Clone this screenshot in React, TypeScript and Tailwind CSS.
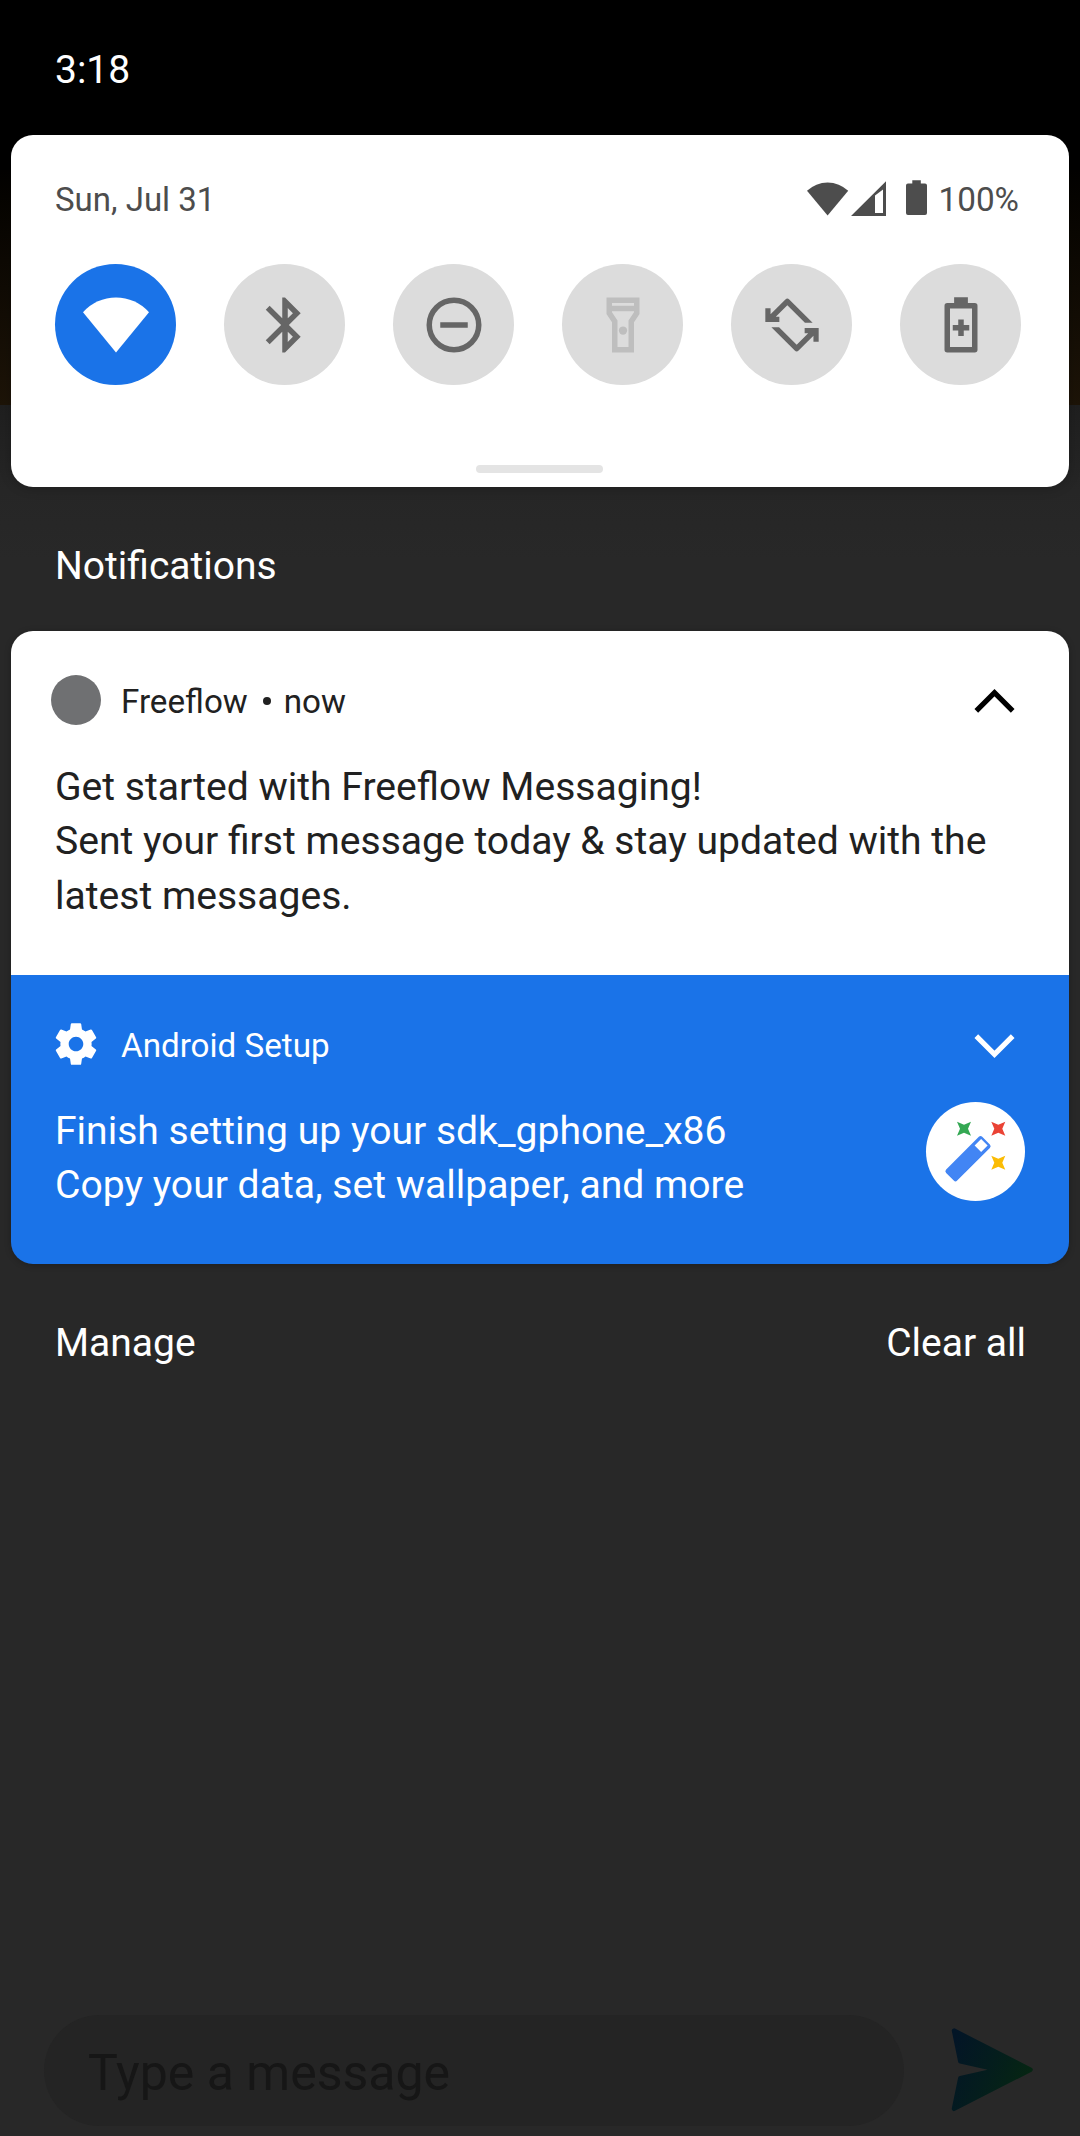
import type { ReactNode } from "react";

function Tile({ active = false, dim = false, children }: { active?: boolean; dim?: boolean; children: ReactNode }) {
  const tone = active ? "bg-[#1a73e8] text-white" : dim ? "bg-[#dcdcdc] text-[#bebebe]" : "bg-[#dcdcdc] text-[#666666]";
  return (
    <button className={`flex size-[121px] shrink-0 items-start rounded-full pt-[28px] pl-[28px] ${tone}`}>
      <svg viewBox="0 0 24 24" className="block size-[66px] shrink-0" fill="currentColor" fillRule="evenodd">
        {children}
      </svg>
    </button>
  );
}

function StatusIcons() {
  return (
    <div className="mr-[6px] flex items-start text-[#4d4d4d]">
      <svg className="h-9 w-[42px]" viewBox="0 0 42 36" fill="currentColor">
        <path d="M0 10.8 A30 30 0 0 1 41.2 10.8 L20.6 35.4 Z" />
      </svg>
      <svg className="ml-[2px] h-9 w-9" viewBox="0 0 36 36" fill="currentColor" fillRule="evenodd">
        <path d="M0 36 L35 1.2 V36 Z M24 15.5 V33 H32 V9.6 Z" />
      </svg>
      <svg className="ml-[19px] h-9 w-[21px]" viewBox="0 0 21 36" fill="currentColor">
        <path d="M6.3 0.3 H14.8 V3.6 H19 Q21 3.6 21 5.6 V33 Q21 35 19 35 H2 Q0 35 0 33 V5.6 Q0 3.6 2 3.6 H6.3 Z" />
      </svg>
      <span className="ml-[11px] text-[33.3px] leading-[39px]">100%</span>
    </div>
  );
}

function QuickSettings() {
  return (
    <section className="mx-[11px] h-[352px] rounded-[22px] bg-white px-11 pt-[45px] shadow-[0_1px_12px_rgba(0,0,0,0.22)]">
      <div className="flex h-[39px] justify-between">
        <span className="text-[33px] leading-[39px] text-[#4d4d4d]">Sun, Jul 31</span>
        <StatusIcons />
      </div>
      <div className="mt-[45px] flex gap-12">
        <Tile active>
          <path d="M0 7.4 A16 16 0 0 1 24 7.4 L12 22 Z" />
        </Tile>
        <Tile>
          <path d="M17.71 7.71L12 2h-1v7.59L6.41 5 5 6.41 10.59 12 5 17.59 6.41 19 11 14.41V22h1l5.71-5.71-4.3-4.29 4.3-4.29zM13 5.83l1.88 1.88L13 9.59V5.83zm1.88 10.46L13 18.17v-3.76l1.88 1.88z" />
        </Tile>
        <Tile>
          <path d="M7 11h10v2H7z" />
          <circle cx="12" cy="12" r="9" fill="none" stroke="currentColor" strokeWidth="2" />
        </Tile>
        <Tile dim>
          <path d="M18 2H6v6l2 3v11h8V11l2-3V2z M16 4v1H8V4h8z M14 10.4V20h-4v-9.6L8 7.4V7h8v0.4z" />
          <circle cx="12" cy="14" r="1.5" />
        </Tile>
        <Tile>
          <path d="M19.5 11.2L11 2.7a1 1 0 0 0-1.4 0L4.2 8.1V5.9H2.3v5h5.1V9H6.1l4.2-4.2 6.4 6.4z" />
          <path transform="rotate(180 12 12)" d="M19.5 11.2L11 2.7a1 1 0 0 0-1.4 0L4.2 8.1V5.9H2.3v5h5.1V9H6.1l4.2-4.2 6.4 6.4z" />
        </Tile>
        <Tile>
          <path d="M9.5 1.9h5V4H17a1 1 0 0 1 1 1v16a1 1 0 0 1-1 1H7a1 1 0 0 1-1-1V5a1 1 0 0 1 1-1h2.5z M8 6v14h8V6z" />
          <path d="M11 10h2v2h2v2h-2v2h-2v-2H9v-2h2z" />
        </Tile>
      </div>
      <div className="mt-20 ml-[421px] h-2 w-[127px] rounded-full bg-[#e4e4e4]" />
    </section>
  );
}

function Star({ x, y, color }: { x: number; y: number; color: string }) {
  return (
    <path
      transform={`translate(${x} ${y})`}
      fill={color}
      d="M-7 -7 L0 -4 L7 -7 L4 0 L7 7 L0 4 L-7 7 L-4 0 Z"
    />
  );
}

function MagicWand() {
  return (
    <svg className="size-[99px] shrink-0 rounded-full bg-white" viewBox="0 0 99 99">
      <Star x={38} y={26.7} color="#34a853" />
      <Star x={72.3} y={26.7} color="#ea4335" />
      <Star x={72.3} y={60.8} color="#fbbc04" />
      <g transform="translate(42 56.7) rotate(-45)">
        <rect x="-25.5" y="-7.8" width="51" height="15.6" rx="2.4" fill="#4285f4" />
        <rect x="14" y="-4.6" width="9.2" height="9.2" fill="#ffffff" />
      </g>
    </svg>
  );
}

function Notifications() {
  return (
    <section className="mx-[11px] overflow-hidden rounded-[22px] shadow-[0_1px_6px_rgba(0,0,0,0.25)]">
      <article className="h-[344px] bg-white px-11 pt-11 text-[#212121]">
        <header className="-ml-1 flex h-[50px] items-start">
          <span className="size-[50px] rounded-full bg-[#6f7072]" />
          <div className="mt-[7px] ml-[20px] flex items-start text-[33.2px] leading-[39px]">
            <span>Freeflow</span>
            <span className="mt-[15px] ml-[15px] size-2 rounded-full bg-[#212121]" />
            <span className="ml-[13px]">now</span>
          </div>
          <svg className="mr-2 ml-auto h-[50px] w-[45px]" viewBox="0 0 45 50" fill="none" stroke="#000000" strokeWidth="5.2">
            <path d="M4.3 35.8 L22.5 17.6 L40.7 35.8" />
          </svg>
        </header>
        <div className="mt-[35px] text-[39.08px] leading-[54.4px] whitespace-nowrap">
          <p>Get started with Freeflow Messaging!</p>
          <p>
            Sent your first message today &amp; stay updated with the
            <br />
            latest messages.
          </p>
        </div>
      </article>
      <article className="h-[289px] bg-[#1a73e8] px-11 pt-11 text-white">
        <header className="-ml-1 flex h-[50px] items-start">
          <svg className="size-[50px]" viewBox="0 0 24 24" fill="currentColor">
            <path d="M19.43 12.98c.04-.32.07-.64.07-.98s-.03-.66-.07-.98l2.11-1.65c.19-.15.24-.42.12-.64l-2-3.46c-.12-.22-.39-.3-.61-.22l-2.49 1c-.52-.4-1.08-.73-1.69-.98l-.38-2.65C14.46 2.18 14.25 2 14 2h-4c-.25 0-.46.18-.49.42l-.38 2.65c-.61.25-1.17.59-1.69.98l-2.49-1c-.23-.09-.49 0-.61.22l-2 3.46c-.13.22-.07.49.12.64l2.11 1.65c-.04.32-.07.65-.07.98s.03.66.07.98l-2.11 1.65c-.19.15-.24.42-.12.64l2 3.46c.12.22.39.3.61.22l2.49-1c.52.4 1.08.73 1.69.98l.38 2.65c.03.24.24.42.49.42h4c.25 0 .46-.18.49-.42l.38-2.65c.61-.25 1.17-.59 1.69-.98l2.49 1c.23.09.49 0 .61-.22l2-3.46c.12-.22.07-.49-.12-.64l-2.11-1.65zM12 15.5c-1.93 0-3.5-1.57-3.5-3.5s1.57-3.5 3.5-3.5 3.5 1.57 3.5 3.5-1.57 3.5-3.5 3.5z" />
          </svg>
          <span className="mt-[7px] ml-[20px] text-[33.2px] leading-[39px]">Android Setup</span>
          <svg className="mr-2 ml-auto h-[50px] w-[45px]" viewBox="0 0 45 50" fill="none" stroke="currentColor" strokeWidth="5.2">
            <path d="M4.3 17.2 L22.5 35.4 L40.7 17.2" />
          </svg>
        </header>
        <div className="mt-[33px] flex items-start justify-between">
          <div className="mt-[2px] text-[39.08px] leading-[54.2px]">
            <p>Finish setting up your sdk_gphone_x86</p>
            <p>Copy your data, set wallpaper, and more</p>
          </div>
          <MagicWand />
        </div>
      </article>
    </section>
  );
}

function MessageBar() {
  return (
    <footer className="mt-auto flex items-start pb-[10px] pl-11">
      <div className="h-[111px] w-[860px] rounded-full bg-[#242424] pt-[3px] pl-11 text-[50px] leading-[111px] text-[#161616]">
        Type a message
      </div>
      <svg className="mt-[11px] ml-[46px] h-[88px] w-[86px]" viewBox="0 0 86 88">
        <defs>
          <linearGradient id="send" x1="0" y1="0.15" x2="1" y2="0.6">
            <stop offset="0" stopColor="#031526" />
            <stop offset="0.5" stopColor="#041d1d" />
            <stop offset="1" stopColor="#062612" />
          </linearGradient>
        </defs>
        <path
          d="M4 4.6 L80.5 43.7 L4 82.8 L10.3 52.2 L48 43.7 L10.3 35.4 Z"
          fill="url(#send)"
          stroke="url(#send)"
          strokeWidth="4.5"
          strokeLinejoin="round"
        />
      </svg>
    </footer>
  );
}

export default function App() {
  return (
    <main className="flex h-[2136px] w-[1080px] flex-col overflow-hidden bg-[#282828] bg-[linear-gradient(to_bottom,#000000_170px,#030200_170px,#1d1408_405px,#1f1f1f_405px,#262626_490px,#282828_560px)] font-[Roboto,sans-serif] text-white">
      <div className="h-[135px] pt-12 pl-[55px] text-[39px] leading-[45px]">3:18</div>
      <QuickSettings />
      <h2 className="mt-[57px] mb-[42px] ml-[55px] text-[39px] leading-[45px]">Notifications</h2>
      <Notifications />
      <div className="mt-[57px] mr-[54px] ml-[55px] flex justify-between text-[39px] leading-[45px]">
        <button>Manage</button>
        <button>Clear all</button>
      </div>
      <MessageBar />
    </main>
  );
}
